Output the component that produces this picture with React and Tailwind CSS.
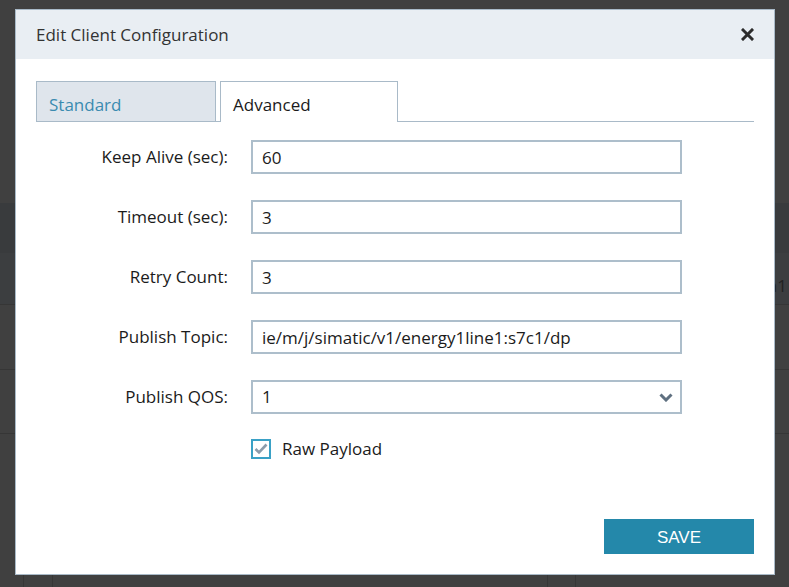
import React, { useState } from 'react';

const font = { fontFamily: '"Open Sans", "Noto Sans", sans-serif' };

const fields = [
    { label: 'Keep Alive (sec):', value: '60' },
    { label: 'Timeout (sec):', value: '3' },
    { label: 'Retry Count:', value: '3' },
    { label: 'Publish Topic:', value: 'ie/m/j/simatic/v1/energy1line1:s7c1/dp' },
];

function Row({ label, children }) {
    return (
        <div className="flex items-center">
            <div className="w-[215px] pr-[23px] text-right text-[17px] text-[#1b1b1b] shrink-0">{label}</div>
            {children}
        </div>
    );
}

export default function App() {
    const [tab, setTab] = useState('advanced');
    const [raw, setRaw] = useState(true);

    return (
        <div className="relative w-[789px] h-[587px] overflow-hidden bg-[#404040]" style={font}>
            {/* page behind the dialog */}
            <div className="flex flex-col">
                <div className="h-[203px] bg-[#404040]"></div>
                <div className="h-[50px] bg-[#393b3d]"></div>
                <div className="h-[52px] bg-[#3c3e40] border-b border-[#363636] flex items-center justify-end pr-[2px]">
                    <span className="text-[17px] text-[#222] mt-[14px]">Area1</span>
                </div>
                <div className="h-[65px] border-b border-[#363636]"></div>
                <div className="h-[64px] border-b border-[#363636]"></div>
                <div className="h-[153px] flex">
                    <div className="w-[24px] border-r border-[#363636]"></div>
                    <div className="w-[29px] border-r border-[#363636]"></div>
                    <div className="w-[495px] border-r border-[#363636]"></div>
                    <div className="w-[28px] border-r border-[#363636]"></div>
                </div>
            </div>

            {/* dialog */}
            <div className="absolute left-[15px] top-[9px] w-[760px] h-[566px] bg-white border border-[#a9bac8] flex flex-col">
                <div className="h-[49px] bg-[#e9eef3] flex items-center justify-between px-[20px] shrink-0">
                    <span className="text-[17px] text-[#333]">Edit Client Configuration</span>
                    <button className="w-[14px] h-[14px] flex items-center justify-center">
                        <svg width="13" height="13" viewBox="0 0 13 13">
                            <path d="M2 2 L11 11 M11 2 L2 11" stroke="#2b2b2b" strokeWidth="3" strokeLinecap="square" />
                        </svg>
                    </button>
                </div>

                <div className="flex-1 flex flex-col px-[20px] pt-[22px] pb-[20px]">
                    <div className="flex items-end gap-[4px] border-b border-[#a9bac8] h-[41px]">
                        <button
                            onClick={() => setTab('standard')}
                            className={`w-[180px] border border-b-0 border-[#a9bac8] text-left pl-[12px] pt-[6px] text-[17px] ${tab === 'standard' ? 'bg-white text-[#1b1b1b] h-[41px] -mb-px' : 'bg-[#dfe5ec] text-[#3a8bb0] h-[40px]'}`}
                        >
                            Standard
                        </button>
                        <button
                            onClick={() => setTab('advanced')}
                            className={`w-[178px] border border-b-0 border-[#a9bac8] text-left pl-[12px] pt-[6px] text-[17px] ${tab === 'advanced' ? 'bg-white text-[#1b1b1b] h-[41px] -mb-px' : 'bg-[#dfe5ec] text-[#3a8bb0] h-[40px]'}`}
                        >
                            Advanced
                        </button>
                    </div>

                    <div className="flex flex-col gap-[26px] pt-[18px]">
                        {fields.map(f => (
                            <Row key={f.label} label={f.label}>
                                <input
                                    defaultValue={f.value}
                                    className="w-[431px] h-[34px] border-2 border-[#adbecb] px-[9px] text-[17px] text-[#1b1b1b] outline-none"
                                    style={font}
                                />
                            </Row>
                        ))}
                        <Row label="Publish QOS:">
                            <div className="relative w-[431px] h-[34px] border-2 border-[#adbecb] flex items-center px-[9px] text-[17px] text-[#1b1b1b]">
                                <span>1</span>
                                <svg className="absolute right-[7px] top-[11px]" width="14" height="9" viewBox="0 0 14 9">
                                    <path d="M1.5 1.5 L7 7 L12.5 1.5" fill="none" stroke="#5f7080" strokeWidth="3" />
                                </svg>
                            </div>
                        </Row>
                        <div className="flex items-center h-[20px] pl-[215px] -mt-[1px]">
                            <button
                                onClick={() => setRaw(!raw)}
                                className="w-[20px] h-[20px] border-2 border-[#3aa1c6] flex items-center justify-center"
                            >
                                {raw && (
                                    <svg width="14" height="12" viewBox="0 0 14 12">
                                        <path d="M1.5 6 L5 9.5 L12.5 1.5" fill="none" stroke="#8c9cab" strokeWidth="2.6" />
                                    </svg>
                                )}
                            </button>
                            <span className="ml-[11px] text-[17px] text-[#1b1b1b]">Raw Payload</span>
                        </div>
                    </div>

                    <div className="mt-auto flex justify-end">
                        <button className="w-[150px] h-[35px] pt-[3px] bg-[#2488aa] text-white text-[17px]" style={{ fontFamily: '"Liberation Sans", Arial, sans-serif' }}>
                            SAVE
                        </button>
                    </div>
                </div>
            </div>
        </div>
    );
}
